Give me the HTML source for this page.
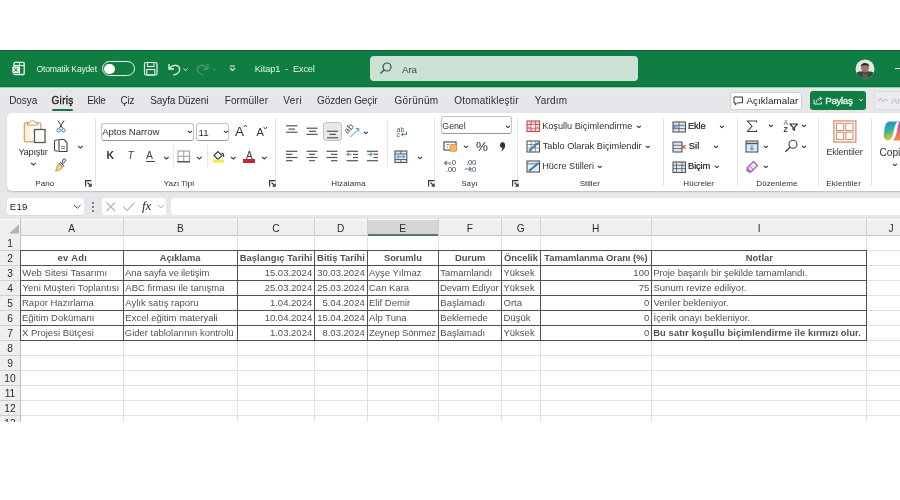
<!DOCTYPE html>
<html><head><meta charset="utf-8"><style>
html,body{margin:0;padding:0;}
body{width:900px;height:500px;overflow:hidden;position:relative;background:#fff;font-family:"Liberation Sans",sans-serif;}
#wrap{position:absolute;left:0;top:0;width:900px;height:500px;will-change:transform;}
.t{position:absolute;white-space:pre;line-height:1;}
.r{position:absolute;}
svg.r{overflow:visible;}
</style></head><body><div id="wrap">
<div class="r" style="left:0px;top:50px;width:900px;height:37px;background:#107e42;"></div>
<div class="r" style="left:0px;top:86px;width:900px;height:1px;background:#1e6540;"></div>
<div class="r" style="left:0px;top:50px;width:900px;height:1px;background:#1f6341;"></div>
<div class="r" style="left:0px;top:87px;width:900px;height:1px;background:#9fd0b4;"></div>
<div class="r" style="left:0px;top:88px;width:900px;height:1.5px;background:#d6f3e2;"></div>
<div class="r" style="left:0px;top:89.5px;width:900px;height:129px;background:#e6e6eb;"></div>
<div class="r" style="left:6.5px;top:112.5px;width:900px;height:78px;background:#fff;border-radius:5px;box-shadow:0 1px 1.5px rgba(0,0,0,0.18);"></div>
<div class="r" style="left:0px;top:219.5px;width:900px;height:15.5px;background:#efefef;"></div>
<div class="r" style="left:0px;top:234.5px;width:900px;height:1px;background:#c6c6c6;"></div>
<div class="r" style="left:367px;top:219.5px;width:71.3px;height:15.5px;background:#d4d7d4;"></div>
<div class="r" style="left:367px;top:233.5px;width:71.3px;height:2px;background:#527a62;"></div>
<div class="r" style="left:0px;top:235px;width:20px;height:187px;background:#efefef;"></div>
<div class="r" style="left:19.8px;top:218px;width:1px;height:204px;background:#c0c0c0;"></div>
<div class="r" style="left:20.5px;top:249.5px;width:880px;height:1px;background:#e0e0e0;"></div>
<div class="r" style="left:0px;top:249.5px;width:20px;height:1px;background:#d0d0d0;"></div>
<div class="r" style="left:20.5px;top:264.5px;width:880px;height:1px;background:#e0e0e0;"></div>
<div class="r" style="left:0px;top:264.5px;width:20px;height:1px;background:#d0d0d0;"></div>
<div class="r" style="left:20.5px;top:279.5px;width:880px;height:1px;background:#e0e0e0;"></div>
<div class="r" style="left:0px;top:279.5px;width:20px;height:1px;background:#d0d0d0;"></div>
<div class="r" style="left:20.5px;top:294.5px;width:880px;height:1px;background:#e0e0e0;"></div>
<div class="r" style="left:0px;top:294.5px;width:20px;height:1px;background:#d0d0d0;"></div>
<div class="r" style="left:20.5px;top:309.5px;width:880px;height:1px;background:#e0e0e0;"></div>
<div class="r" style="left:0px;top:309.5px;width:20px;height:1px;background:#d0d0d0;"></div>
<div class="r" style="left:20.5px;top:324.5px;width:880px;height:1px;background:#e0e0e0;"></div>
<div class="r" style="left:0px;top:324.5px;width:20px;height:1px;background:#d0d0d0;"></div>
<div class="r" style="left:20.5px;top:339.5px;width:880px;height:1px;background:#e0e0e0;"></div>
<div class="r" style="left:0px;top:339.5px;width:20px;height:1px;background:#d0d0d0;"></div>
<div class="r" style="left:20.5px;top:354.5px;width:880px;height:1px;background:#e0e0e0;"></div>
<div class="r" style="left:0px;top:354.5px;width:20px;height:1px;background:#d0d0d0;"></div>
<div class="r" style="left:20.5px;top:369.5px;width:880px;height:1px;background:#e0e0e0;"></div>
<div class="r" style="left:0px;top:369.5px;width:20px;height:1px;background:#d0d0d0;"></div>
<div class="r" style="left:20.5px;top:384.5px;width:880px;height:1px;background:#e0e0e0;"></div>
<div class="r" style="left:0px;top:384.5px;width:20px;height:1px;background:#d0d0d0;"></div>
<div class="r" style="left:20.5px;top:399.5px;width:880px;height:1px;background:#e0e0e0;"></div>
<div class="r" style="left:0px;top:399.5px;width:20px;height:1px;background:#d0d0d0;"></div>
<div class="r" style="left:20.5px;top:414.5px;width:880px;height:1px;background:#e0e0e0;"></div>
<div class="r" style="left:0px;top:414.5px;width:20px;height:1px;background:#d0d0d0;"></div>
<div class="r" style="left:122.8px;top:235px;width:1px;height:187px;background:#e0e0e0;"></div>
<div class="r" style="left:122.8px;top:218px;width:1px;height:17px;background:#d0d0d0;"></div>
<div class="r" style="left:237.0px;top:235px;width:1px;height:187px;background:#e0e0e0;"></div>
<div class="r" style="left:237.0px;top:218px;width:1px;height:17px;background:#d0d0d0;"></div>
<div class="r" style="left:314.0px;top:235px;width:1px;height:187px;background:#e0e0e0;"></div>
<div class="r" style="left:314.0px;top:218px;width:1px;height:17px;background:#d0d0d0;"></div>
<div class="r" style="left:366.5px;top:235px;width:1px;height:187px;background:#e0e0e0;"></div>
<div class="r" style="left:366.5px;top:218px;width:1px;height:17px;background:#d0d0d0;"></div>
<div class="r" style="left:437.8px;top:235px;width:1px;height:187px;background:#e0e0e0;"></div>
<div class="r" style="left:437.8px;top:218px;width:1px;height:17px;background:#d0d0d0;"></div>
<div class="r" style="left:501.0px;top:235px;width:1px;height:187px;background:#e0e0e0;"></div>
<div class="r" style="left:501.0px;top:218px;width:1px;height:17px;background:#d0d0d0;"></div>
<div class="r" style="left:539.5px;top:235px;width:1px;height:187px;background:#e0e0e0;"></div>
<div class="r" style="left:539.5px;top:218px;width:1px;height:17px;background:#d0d0d0;"></div>
<div class="r" style="left:651.0px;top:235px;width:1px;height:187px;background:#e0e0e0;"></div>
<div class="r" style="left:651.0px;top:218px;width:1px;height:17px;background:#d0d0d0;"></div>
<div class="r" style="left:866.2px;top:235px;width:1px;height:187px;background:#e0e0e0;"></div>
<div class="r" style="left:866.2px;top:218px;width:1px;height:17px;background:#d0d0d0;"></div>
<div class="r" style="left:20px;top:250px;width:847px;height:1px;background:#505050;"></div>
<div class="r" style="left:20px;top:265px;width:847px;height:1px;background:#505050;"></div>
<div class="r" style="left:20px;top:280px;width:847px;height:1px;background:#505050;"></div>
<div class="r" style="left:20px;top:295px;width:847px;height:1px;background:#505050;"></div>
<div class="r" style="left:20px;top:310px;width:847px;height:1px;background:#505050;"></div>
<div class="r" style="left:20px;top:325px;width:847px;height:1px;background:#505050;"></div>
<div class="r" style="left:20px;top:340px;width:847px;height:1px;background:#505050;"></div>
<div class="r" style="left:20px;top:250px;width:1px;height:91px;background:#505050;"></div>
<div class="r" style="left:123px;top:250px;width:1px;height:91px;background:#505050;"></div>
<div class="r" style="left:237px;top:250px;width:1px;height:91px;background:#505050;"></div>
<div class="r" style="left:314px;top:250px;width:1px;height:91px;background:#505050;"></div>
<div class="r" style="left:367px;top:250px;width:1px;height:91px;background:#505050;"></div>
<div class="r" style="left:438px;top:250px;width:1px;height:91px;background:#505050;"></div>
<div class="r" style="left:501px;top:250px;width:1px;height:91px;background:#505050;"></div>
<div class="r" style="left:540px;top:250px;width:1px;height:91px;background:#505050;"></div>
<div class="r" style="left:651px;top:250px;width:1px;height:91px;background:#505050;"></div>
<div class="r" style="left:866px;top:250px;width:1px;height:91px;background:#505050;"></div>
<div class="r" style="left:0px;top:422px;width:900px;height:78px;background:#fff;"></div>
<div class="t" style="left:68.25px;top:224.00px;font-size:10.2px;color:#2b2b2b;">A</div>
<div class="t" style="left:177.00px;top:224.00px;font-size:10.2px;color:#2b2b2b;">B</div>
<div class="t" style="left:272.32px;top:224.00px;font-size:10.2px;color:#2b2b2b;">C</div>
<div class="t" style="left:337.07px;top:224.00px;font-size:10.2px;color:#2b2b2b;">D</div>
<div class="t" style="left:399.25px;top:224.00px;font-size:10.2px;color:#2b2b2b;">E</div>
<div class="t" style="left:466.78px;top:224.00px;font-size:10.2px;color:#2b2b2b;">F</div>
<div class="t" style="left:516.78px;top:224.00px;font-size:10.2px;color:#2b2b2b;">G</div>
<div class="t" style="left:592.07px;top:224.00px;font-size:10.2px;color:#2b2b2b;">H</div>
<div class="t" style="left:757.68px;top:224.00px;font-size:10.2px;color:#2b2b2b;">I</div>
<div class="t" style="left:888.45px;top:224.00px;font-size:10.2px;color:#2b2b2b;">J</div>
<div class="t" style="left:7.16px;top:239.00px;font-size:10.2px;color:#2b2b2b;">1</div>
<div class="t" style="left:7.16px;top:254.00px;font-size:10.2px;color:#2b2b2b;">2</div>
<div class="t" style="left:7.16px;top:269.00px;font-size:10.2px;color:#2b2b2b;">3</div>
<div class="t" style="left:7.16px;top:284.00px;font-size:10.2px;color:#2b2b2b;">4</div>
<div class="t" style="left:7.16px;top:299.00px;font-size:10.2px;color:#2b2b2b;">5</div>
<div class="t" style="left:7.16px;top:314.00px;font-size:10.2px;color:#2b2b2b;">6</div>
<div class="t" style="left:7.16px;top:329.00px;font-size:10.2px;color:#2b2b2b;">7</div>
<div class="t" style="left:7.16px;top:344.00px;font-size:10.2px;color:#2b2b2b;">8</div>
<div class="t" style="left:7.16px;top:359.00px;font-size:10.2px;color:#2b2b2b;">9</div>
<div class="t" style="left:4.33px;top:374.00px;font-size:10.2px;color:#2b2b2b;">10</div>
<div class="t" style="left:4.71px;top:389.00px;font-size:10.2px;color:#2b2b2b;">11</div>
<div class="t" style="left:4.33px;top:404.00px;font-size:10.2px;color:#2b2b2b;">12</div>
<div class="t" style="left:4.33px;top:419.00px;font-size:10.2px;color:#2b2b2b;">13</div>
<div class="t" style="left:57.62px;top:253.00px;font-size:9.4px;color:#525252;font-weight:bold;letter-spacing:0.293px;">ev Adı</div>
<div class="t" style="left:22.35px;top:268.00px;font-size:9.5px;color:#525252;letter-spacing:0.040px;">Web Sitesi Tasarımı</div>
<div class="t" style="left:22.46px;top:283.00px;font-size:9.5px;color:#525252;letter-spacing:0.075px;">Yeni Müşteri Toplantısı</div>
<div class="t" style="left:22.00px;top:298.00px;font-size:9.5px;color:#525252;">Rapor Hazırlama</div>
<div class="t" style="left:22.00px;top:313.00px;font-size:9.5px;color:#525252;">Eğitim Dokümanı</div>
<div class="t" style="left:22.00px;top:328.00px;font-size:9.5px;color:#525252;">X Projesi Bütçesi</div>
<div class="t" style="left:159.76px;top:253.00px;font-size:9.4px;color:#525252;font-weight:bold;letter-spacing:-0.061px;">Açıklama</div>
<div class="t" style="left:125.00px;top:268.00px;font-size:9.5px;color:#525252;letter-spacing:-0.114px;">Ana sayfa ve iletişim</div>
<div class="t" style="left:125.30px;top:283.00px;font-size:9.5px;color:#525252;">ABC firması ile tanışma</div>
<div class="t" style="left:125.30px;top:298.00px;font-size:9.5px;color:#525252;">Aylık satış raporu</div>
<div class="t" style="left:125.30px;top:313.00px;font-size:9.5px;color:#525252;">Excel eğitim materyali</div>
<div class="t" style="left:124.83px;top:328.00px;font-size:9.5px;color:#525252;letter-spacing:-0.021px;">Gider tablolarının kontrolü</div>
<div class="t" style="left:239.69px;top:253.00px;font-size:9.4px;color:#525252;font-weight:bold;letter-spacing:0.067px;">Başlangıç Tarihi</div>
<div class="t" style="left:264.65px;top:268.00px;font-size:9.5px;color:#525252;">15.03.2024</div>
<div class="t" style="left:264.65px;top:283.00px;font-size:9.5px;color:#525252;">25.03.2024</div>
<div class="t" style="left:269.94px;top:298.00px;font-size:9.5px;color:#525252;">1.04.2024</div>
<div class="t" style="left:264.65px;top:313.00px;font-size:9.5px;color:#525252;">10.04.2024</div>
<div class="t" style="left:269.94px;top:328.00px;font-size:9.5px;color:#525252;">1.03.2024</div>
<div class="t" style="left:317.11px;top:253.00px;font-size:9.4px;color:#525252;font-weight:bold;">Bitiş Tarihi</div>
<div class="t" style="left:317.15px;top:268.00px;font-size:9.5px;color:#525252;">30.03.2024</div>
<div class="t" style="left:317.15px;top:283.00px;font-size:9.5px;color:#525252;">25.03.2024</div>
<div class="t" style="left:322.44px;top:298.00px;font-size:9.5px;color:#525252;">5.04.2024</div>
<div class="t" style="left:317.15px;top:313.00px;font-size:9.5px;color:#525252;">15.04.2024</div>
<div class="t" style="left:322.44px;top:328.00px;font-size:9.5px;color:#525252;">8.03.2024</div>
<div class="t" style="left:383.89px;top:253.00px;font-size:9.4px;color:#525252;font-weight:bold;">Sorumlu</div>
<div class="t" style="left:369.00px;top:268.00px;font-size:9.5px;color:#525252;">Ayşe Yılmaz</div>
<div class="t" style="left:369.00px;top:283.00px;font-size:9.5px;color:#525252;">Can Kara</div>
<div class="t" style="left:369.00px;top:298.00px;font-size:9.5px;color:#525252;">Elif Demir</div>
<div class="t" style="left:369.00px;top:313.00px;font-size:9.5px;color:#525252;">Alp Tuna</div>
<div class="t" style="left:369.01px;top:328.00px;font-size:9.5px;color:#525252;letter-spacing:-0.175px;">Zeynep Sönmez</div>
<div class="t" style="left:455.06px;top:253.00px;font-size:9.4px;color:#525252;font-weight:bold;">Durum</div>
<div class="t" style="left:440.30px;top:268.00px;font-size:9.5px;color:#525252;">Tamamlandı</div>
<div class="t" style="left:439.94px;top:283.00px;font-size:9.5px;color:#525252;letter-spacing:-0.092px;">Devam Ediyor</div>
<div class="t" style="left:440.30px;top:298.00px;font-size:9.5px;color:#525252;">Başlamadı</div>
<div class="t" style="left:440.30px;top:313.00px;font-size:9.5px;color:#525252;">Beklemede</div>
<div class="t" style="left:440.30px;top:328.00px;font-size:9.5px;color:#525252;">Başlamadı</div>
<div class="t" style="left:504.07px;top:253.00px;font-size:9.4px;color:#525252;font-weight:bold;">Öncelik</div>
<div class="t" style="left:503.50px;top:268.00px;font-size:9.5px;color:#525252;">Yüksek</div>
<div class="t" style="left:503.50px;top:283.00px;font-size:9.5px;color:#525252;">Yüksek</div>
<div class="t" style="left:503.50px;top:298.00px;font-size:9.5px;color:#525252;">Orta</div>
<div class="t" style="left:503.50px;top:313.00px;font-size:9.5px;color:#525252;">Düşük</div>
<div class="t" style="left:503.50px;top:328.00px;font-size:9.5px;color:#525252;">Yüksek</div>
<div class="t" style="left:544.16px;top:253.00px;font-size:9.4px;color:#525252;font-weight:bold;">Tamamlanma Oranı (%)</div>
<div class="t" style="left:633.35px;top:268.00px;font-size:9.5px;color:#525252;">100</div>
<div class="t" style="left:638.63px;top:283.00px;font-size:9.5px;color:#525252;">75</div>
<div class="t" style="left:643.92px;top:298.00px;font-size:9.5px;color:#525252;">0</div>
<div class="t" style="left:643.92px;top:313.00px;font-size:9.5px;color:#525252;">0</div>
<div class="t" style="left:643.92px;top:328.00px;font-size:9.5px;color:#525252;">0</div>
<div class="t" style="left:745.82px;top:253.00px;font-size:9.4px;color:#525252;font-weight:bold;">Notlar</div>
<div class="t" style="left:653.14px;top:268.00px;font-size:9.5px;color:#525252;letter-spacing:-0.050px;">Proje başarılı bir şekilde tamamlandı.</div>
<div class="t" style="left:653.50px;top:283.00px;font-size:9.5px;color:#525252;">Sunum revize ediliyor.</div>
<div class="t" style="left:653.50px;top:298.00px;font-size:9.5px;color:#525252;">Veriler bekleniyor.</div>
<div class="t" style="left:653.50px;top:313.00px;font-size:9.5px;color:#525252;">İçerik onayı bekleniyor.</div>
<div class="t" style="left:653.29px;top:328.00px;font-size:9.4px;color:#525252;font-weight:bold;letter-spacing:0.072px;">Bu satır koşullu biçimlendirme ile kırmızı olur.</div>
<svg class="r" style="left:11px;top:61px;" width="16" height="16" viewBox="0 0 16 16"><rect x="3" y="1.3" width="10.2" height="12.2" rx="1" fill="none" stroke="#e8f5ec" stroke-width="1.3"/>
<line x1="3" y1="4.5" x2="13" y2="4.5" stroke="#e8f5ec" stroke-width="1.1"/>
<line x1="8.5" y1="1.5" x2="8.5" y2="13.5" stroke="#e8f5ec" stroke-width="1.1"/>
<rect x="1.3" y="5.4" width="7" height="6.7" rx="1" fill="#e8f5ec"/>
<path d="M3.3 7 L6.3 10.6 M6.3 7 L3.3 10.6" stroke="#1b7a43" stroke-width="1"/></svg>
<div class="t" style="left:36.61px;top:65.00px;font-size:8.6px;color:#e2f6ea;letter-spacing:-0.223px;">Otomatik Kaydet</div>
<div class="r" style="left:102px;top:61px;width:33px;height:15px;border:1.2px solid #f0f0f0;border-radius:8px;box-sizing:border-box;"></div>
<div class="r" style="left:104px;top:63.5px;width:10.5px;height:10.5px;background:#fff;border-radius:50%;"></div>
<svg class="r" style="left:143px;top:61px;" width="16" height="15" viewBox="0 0 16 15"><rect x="1.5" y="1.5" width="12.5" height="12.5" rx="1.5" fill="none" stroke="#e8f5ec" stroke-width="1.2"/>
<rect x="4.5" y="1.5" width="6.5" height="4" fill="none" stroke="#e8f5ec" stroke-width="1.1"/>
<rect x="3.8" y="8.5" width="8" height="5.5" fill="none" stroke="#e8f5ec" stroke-width="1.1"/></svg>
<svg class="r" style="left:166px;top:60px;" width="24" height="17" viewBox="0 0 24 17"><path d="M3 4 V9 H8" fill="none" stroke="#e8f5ec" stroke-width="1.3"/>
<path d="M3.5 8.5 C6 4.5 12.5 4 13.5 8.5 C14.3 12 11 14.5 7.5 15" fill="none" stroke="#e8f5ec" stroke-width="1.3"/>
<path d="M17.5 8.5 L19.5 10.5 L21.5 8.5" fill="none" stroke="#e8f5ec" stroke-width="1"/></svg>
<svg class="r" style="left:195px;top:60px;" width="24" height="17" viewBox="0 0 24 17"><path d="M13 4 V9 H8" fill="none" stroke="#4f9a6c" stroke-width="1.3"/>
<path d="M12.5 8.5 C10 4.5 3.5 4 2.5 8.5 C1.7 12 5 14.5 8.5 15" fill="none" stroke="#4f9a6c" stroke-width="1.3"/>
<path d="M17.5 8.5 L19.5 10.5 L21.5 8.5" fill="none" stroke="#4f9a6c" stroke-width="1"/></svg>
<svg class="r" style="left:228.5px;top:65px;" width="7" height="7" viewBox="0 0 7 7"><path d="M1 1 H6" stroke="#e8f5ec" stroke-width="1"/><path d="M1 3 L3.5 5.5 L6 3" fill="none" stroke="#e8f5ec" stroke-width="1.1"/></svg>
<div class="t" style="left:254.86px;top:65.00px;font-size:9.2px;color:#e2f6ea;letter-spacing:-0.116px;">Kitap1  -  Excel</div>
<div class="r" style="left:369.5px;top:56px;width:268px;height:24.5px;background:#cde2d5;border-radius:4px;"></div>
<svg class="r" style="left:378px;top:61px;" width="16" height="15" viewBox="0 0 16 15"><circle cx="9" cy="6" r="4" fill="none" stroke="#2d5a3f" stroke-width="1.2"/><path d="M6.2 8.8 L2.5 12.5" stroke="#2d5a3f" stroke-width="1.3"/></svg>
<div class="t" style="left:402.00px;top:65.00px;font-size:9.8px;color:#2c4b37;letter-spacing:-0.120px;">Ara</div>
<svg class="r" style="left:854.5px;top:59px;" width="20" height="20" viewBox="0 0 20 20"><defs><clipPath id="av"><circle cx="10" cy="10" r="9.5"/></clipPath></defs>
<g clip-path="url(#av)"><rect width="20" height="20" fill="#e4e8e5"/>
<path d="M0 20 V15 C2 12.5 6 12 10 12.5 C14 12 18 12.5 20 15 V20Z" fill="#3b463b"/>
<ellipse cx="10" cy="8.6" rx="4" ry="4.9" fill="#9c7868"/>
<path d="M5.6 7.5 C5.5 3 14.5 3 14.4 7.5 C13.5 5.8 6.5 5.8 5.6 7.5Z" fill="#231e1b"/>
<path d="M7.5 13.5 L10 15.5 L12.5 13.5 L12.8 20 H7.2Z" fill="#5d6455"/></g></svg>
<div class="r" style="left:895px;top:67.8px;width:5px;height:1.3px;background:#e8f5ec;"></div>
<div class="t" style="left:9.20px;top:96.00px;font-size:10px;color:#2e2e2e;letter-spacing:-0.063px;">Dosya</div>
<div class="t" style="left:51.50px;top:96.00px;font-size:10px;color:#222;letter-spacing:0.325px;-webkit-text-stroke:0.35px #222;">Giriş</div>
<div class="t" style="left:87.20px;top:96.00px;font-size:10px;color:#2e2e2e;letter-spacing:-0.250px;">Ekle</div>
<div class="t" style="left:120.50px;top:96.00px;font-size:10px;color:#2e2e2e;letter-spacing:-0.225px;">Çiz</div>
<div class="t" style="left:150.25px;top:96.00px;font-size:10px;color:#2e2e2e;letter-spacing:-0.114px;">Sayfa Düzeni</div>
<div class="t" style="left:224.70px;top:96.00px;font-size:10px;color:#2e2e2e;letter-spacing:0.131px;">Formüller</div>
<div class="t" style="left:283.25px;top:96.00px;font-size:10px;color:#2e2e2e;letter-spacing:0.400px;">Veri</div>
<div class="t" style="left:317.00px;top:96.00px;font-size:10px;color:#2e2e2e;letter-spacing:-0.091px;">Gözden Geçir</div>
<div class="t" style="left:394.50px;top:96.00px;font-size:10px;color:#2e2e2e;letter-spacing:0.325px;">Görünüm</div>
<div class="t" style="left:454.15px;top:96.00px;font-size:10px;color:#2e2e2e;letter-spacing:0.262px;">Otomatikleştir</div>
<div class="t" style="left:534.75px;top:96.00px;font-size:10px;color:#2e2e2e;letter-spacing:0.180px;">Yardım</div>
<div class="r" style="left:52px;top:109px;width:21px;height:2.2px;background:#1f6e47;border-radius:1px;"></div>
<div class="r" style="left:730px;top:92px;width:72px;height:17.5px;background:#fff;border:1px solid #cfcfcf;border-radius:3px;box-sizing:border-box;"></div>
<svg class="r" style="left:732.5px;top:95.5px;" width="11" height="10" viewBox="0 0 11 10"><path d="M1 1 H9.5 V6.8 H4.5 L2.3 9 V6.8 H1 Z" fill="none" stroke="#333" stroke-width="1" stroke-linejoin="round"/></svg>
<div class="t" style="left:746.50px;top:96.00px;font-size:9.8px;color:#1c1c1c;letter-spacing:0.049px;">Açıklamalar</div>
<div class="r" style="left:809.5px;top:91px;width:56.5px;height:18.5px;background:#107e42;border-radius:3px;"></div>
<svg class="r" style="left:812.5px;top:95px;" width="10" height="10" viewBox="0 0 10 10"><path d="M1 4.5 V9 H8.5 V7" fill="none" stroke="#e8f5ec" stroke-width="1"/><path d="M3 7.5 C3.3 4.5 5.5 3.5 8.5 3.5 M6.8 1.5 L8.8 3.5 L6.8 5.5" fill="none" stroke="#e8f5ec" stroke-width="1"/></svg>
<div class="t" style="left:825.22px;top:96.00px;font-size:9.8px;color:#f4faf6;letter-spacing:-0.355px;-webkit-text-stroke:0.3px #f4faf6;">Paylaş</div>
<svg class="r" style="left:857.5px;top:98px;" width="6" height="5" viewBox="0 0 6 5"><path d="M1 1 L3 3 L5 1" fill="none" stroke="#e8f5ec" stroke-width="1"/></svg>
<div class="r" style="left:874px;top:91px;width:40px;height:18.5px;background:#ececf0;border:1px solid #dcdce0;border-radius:3px;box-sizing:border-box;"></div>
<svg class="r" style="left:877px;top:96px;" width="12" height="8" viewBox="0 0 12 8"><path d="M1 5 L3.5 2 L6 6 L8.5 3 L11 5" fill="none" stroke="#b5b5b5" stroke-width="1"/></svg>
<div class="t" style="left:891.00px;top:96.00px;font-size:9.8px;color:#b8b8b8;">Ara</div>
<div class="r" style="left:94.5px;top:118px;width:1px;height:68px;background:#e3e3e3;"></div>
<div class="r" style="left:275px;top:118px;width:1px;height:68px;background:#e3e3e3;"></div>
<div class="r" style="left:434px;top:118px;width:1px;height:68px;background:#e3e3e3;"></div>
<div class="r" style="left:517px;top:118px;width:1px;height:68px;background:#e3e3e3;"></div>
<div class="r" style="left:663px;top:118px;width:1px;height:68px;background:#e3e3e3;"></div>
<div class="r" style="left:737px;top:118px;width:1px;height:68px;background:#e3e3e3;"></div>
<div class="r" style="left:818px;top:118px;width:1px;height:68px;background:#e3e3e3;"></div>
<div class="r" style="left:870.5px;top:118px;width:1px;height:68px;background:#e3e3e3;"></div>
<div class="t" style="left:35.36px;top:180.00px;font-size:8px;color:#2e2e2e;letter-spacing:0.027px;">Pano</div>
<div class="t" style="left:163.80px;top:180.00px;font-size:8px;color:#2e2e2e;letter-spacing:0.005px;">Yazı Tipi</div>
<div class="t" style="left:331.36px;top:180.00px;font-size:8px;color:#2e2e2e;letter-spacing:0.103px;">Hizalama</div>
<div class="t" style="left:461.14px;top:180.00px;font-size:8px;color:#2e2e2e;letter-spacing:0.127px;">Sayı</div>
<div class="t" style="left:579.64px;top:180.00px;font-size:8px;color:#2e2e2e;letter-spacing:0.030px;">Stiller</div>
<div class="t" style="left:683.36px;top:180.00px;font-size:8px;color:#2e2e2e;letter-spacing:0.037px;">Hücreler</div>
<div class="t" style="left:756.36px;top:180.00px;font-size:8px;color:#2e2e2e;letter-spacing:0.065px;">Düzenleme</div>
<div class="t" style="left:826.36px;top:180.00px;font-size:8px;color:#2e2e2e;letter-spacing:0.176px;">Eklentiler</div>
<svg class="r" style="left:84.5px;top:180px;" width="7" height="7" viewBox="0 0 7 7"><path d="M0.6 6.4 V0.6 H6.4" fill="none" stroke="#333" stroke-width="1.1"/><path d="M2.5 2.5 L6 6 M6.2 3.5 V6.2 H3.5" fill="none" stroke="#333" stroke-width="1.1"/></svg>
<svg class="r" style="left:268.5px;top:180px;" width="7" height="7" viewBox="0 0 7 7"><path d="M0.6 6.4 V0.6 H6.4" fill="none" stroke="#333" stroke-width="1.1"/><path d="M2.5 2.5 L6 6 M6.2 3.5 V6.2 H3.5" fill="none" stroke="#333" stroke-width="1.1"/></svg>
<svg class="r" style="left:427.5px;top:180px;" width="7" height="7" viewBox="0 0 7 7"><path d="M0.6 6.4 V0.6 H6.4" fill="none" stroke="#333" stroke-width="1.1"/><path d="M2.5 2.5 L6 6 M6.2 3.5 V6.2 H3.5" fill="none" stroke="#333" stroke-width="1.1"/></svg>
<svg class="r" style="left:511.5px;top:180px;" width="7" height="7" viewBox="0 0 7 7"><path d="M0.6 6.4 V0.6 H6.4" fill="none" stroke="#333" stroke-width="1.1"/><path d="M2.5 2.5 L6 6 M6.2 3.5 V6.2 H3.5" fill="none" stroke="#333" stroke-width="1.1"/></svg>
<svg class="r" style="left:23px;top:119px;" width="24" height="25" viewBox="0 0 24 25"><defs><linearGradient id="cb" x1="0" y1="0" x2="1" y2="0"><stop offset="0" stop-color="#fbe8c6"/><stop offset="0.6" stop-color="#fffdf8"/><stop offset="1" stop-color="#ffffff"/></linearGradient></defs>
<rect x="1.3" y="3.8" width="16.5" height="19" rx="1.2" fill="url(#cb)" stroke="#c8a46b" stroke-width="1.2"/>
<path d="M4.5 6 V3.5 H7 C7 1 12 1 12 3.5 H14.5 V6 Z" fill="#fff" stroke="#b89a6a" stroke-width="1"/>
<rect x="11.5" y="10.5" width="10.5" height="13" fill="#fff" stroke="#555" stroke-width="1.3"/></svg>
<div class="t" style="left:18.37px;top:147.00px;font-size:9.4px;color:#333;letter-spacing:-0.300px;">Yapıştır</div>
<svg class="r" style="left:29.9px;top:162.0px;" width="6.675" height="5" viewBox="0 0 6.675 5"><path d="M1 1 L3.3375 2.986875 L5.675 1" fill="none" stroke="#444" stroke-width="1.05"/></svg>
<svg class="r" style="left:55.5px;top:120px;" width="10" height="13" viewBox="0 0 10 13"><path d="M2 0.5 L6.6 8.3 M8 0.5 L3.4 8.3" stroke="#333" stroke-width="0.9"/>
<circle cx="2.6" cy="10.3" r="1.7" fill="none" stroke="#3b7fc0" stroke-width="1"/><circle cx="7.4" cy="10.3" r="1.7" fill="none" stroke="#3b7fc0" stroke-width="1"/></svg>
<svg class="r" style="left:53px;top:138px;" width="15" height="15" viewBox="0 0 15 15"><path d="M5 2 H3 C2 2 1.5 2.5 1.5 3.5 V11.5 C1.5 12.5 2 13 3 13 H5" fill="none" stroke="#444" stroke-width="1.1"/>
<path d="M6 1.5 H11 L14 4.5 V13.5 H6 Z" fill="#fff" stroke="#444" stroke-width="1.1"/>
<path d="M8 8.5 H12 M8 10.5 H12" stroke="#777" stroke-width="0.9"/></svg>
<svg class="r" style="left:76.9px;top:144.5px;" width="6.675" height="5" viewBox="0 0 6.675 5"><path d="M1 1 L3.3375 2.986875 L5.675 1" fill="none" stroke="#444" stroke-width="1.05"/></svg>
<svg class="r" style="left:54px;top:158px;" width="14" height="14" viewBox="0 0 14 14"><path d="M9.5 1 C10.5 0.3 12.2 1.5 11.6 2.6 L9.3 5.6 L8 4.4 Z" fill="#fff" stroke="#444" stroke-width="1"/>
<path d="M6.2 4.5 L9.8 7.6 L8.6 8.8 L5 5.7 Z" fill="#fff" stroke="#444" stroke-width="1"/>
<path d="M5 5.8 L8.6 8.9 C7.5 11 5 12.8 1.5 13 C2.5 11.5 2.8 9.8 2.8 8.5 C3.2 7.2 4 6.4 5 5.8Z" fill="#f3d294" stroke="#c09050" stroke-width="0.9"/></svg>
<div class="r" style="left:100.5px;top:122.5px;width:93px;height:18.5px;background:#fff;border:1px solid #c4c4c4;border-bottom-color:#9a9a9a;border-radius:3px;box-sizing:border-box;"></div>
<div class="t" style="left:102.20px;top:127.00px;font-size:9.6px;color:#333;letter-spacing:-0.089px;">Aptos Narrow</div>
<svg class="r" style="left:187.4px;top:130.0px;" width="5.824999999999999" height="5" viewBox="0 0 5.824999999999999 5"><path d="M1 1 L2.9124999999999996 2.625625 L4.824999999999999 1" fill="none" stroke="#333" stroke-width="1.05"/></svg>
<div class="r" style="left:196px;top:122.5px;width:33.4px;height:18.5px;background:#fff;border:1px solid #c4c4c4;border-bottom-color:#9a9a9a;border-radius:3px;box-sizing:border-box;"></div>
<div class="t" style="left:198.50px;top:128.00px;font-size:9.8px;color:#333;">11</div>
<svg class="r" style="left:222.9px;top:130.0px;" width="5.824999999999999" height="5" viewBox="0 0 5.824999999999999 5"><path d="M1 1 L2.9124999999999996 2.625625 L4.824999999999999 1" fill="none" stroke="#333" stroke-width="1.05"/></svg>
<div class="t" style="left:235.00px;top:125.00px;font-size:13.5px;color:#333;">A</div>
<svg class="r" style="left:243px;top:124px;" width="5" height="4" viewBox="0 0 5 4"><path d="M0.7 3 L2.3 1 L3.9 3" fill="none" stroke="#333" stroke-width="0.9"/></svg>
<div class="t" style="left:256.50px;top:127.00px;font-size:11px;color:#333;">A</div>
<svg class="r" style="left:263px;top:126px;" width="5" height="4" viewBox="0 0 5 4"><path d="M0.7 1 L2.3 3 L3.9 1" fill="none" stroke="#333" stroke-width="0.9"/></svg>
<div class="t" style="left:106.50px;top:151.00px;font-size:10.4px;color:#333;font-weight:bold;">K</div>
<div class="t" style="left:127.50px;top:151.00px;font-size:10.4px;color:#444;font-style:italic;">T</div>
<div class="t" style="left:146.00px;top:151.00px;font-size:10.4px;color:#444;">A</div>
<div class="r" style="left:145.5px;top:161px;width:9.5px;height:1.1px;background:#444;"></div>
<svg class="r" style="left:162.9px;top:155.5px;" width="6.675" height="5" viewBox="0 0 6.675 5"><path d="M1 1 L3.3375 2.986875 L5.675 1" fill="none" stroke="#444" stroke-width="1.05"/></svg>
<div class="r" style="left:172.5px;top:145px;width:1px;height:22px;background:#e6e6e6;"></div>
<svg class="r" style="left:177px;top:150px;" width="14" height="13" viewBox="0 0 14 13"><rect x="1" y="1" width="11.5" height="10.5" fill="none" stroke="#9a9a9a" stroke-width="1"/>
<path d="M6.75 1 V11.5 M1 6.25 H12.5" stroke="#9a9a9a" stroke-width="1"/><path d="M0.5 11.8 H13" stroke="#444" stroke-width="1.3"/></svg>
<svg class="r" style="left:196.4px;top:155.5px;" width="6.675" height="5" viewBox="0 0 6.675 5"><path d="M1 1 L3.3375 2.986875 L5.675 1" fill="none" stroke="#444" stroke-width="1.05"/></svg>
<div class="r" style="left:206.5px;top:145px;width:1px;height:22px;background:#e6e6e6;"></div>
<svg class="r" style="left:212px;top:149px;" width="13" height="14" viewBox="0 0 13 14"><path d="M2 6.5 L6 2.5 L10 6.5 L6 10.5 Z" fill="#fff" stroke="#333" stroke-width="1.1"/>
<path d="M9.5 4 C11.5 4.5 12 6 11.5 8" fill="none" stroke="#333" stroke-width="1.1"/>
<rect x="0.8" y="10.5" width="11.2" height="3.2" fill="#f2ee3a"/></svg>
<svg class="r" style="left:229.9px;top:155.5px;" width="6.675" height="5" viewBox="0 0 6.675 5"><path d="M1 1 L3.3375 2.986875 L5.675 1" fill="none" stroke="#444" stroke-width="1.05"/></svg>
<div class="t" style="left:246.00px;top:151.00px;font-size:10px;color:#333;">A</div>
<div class="r" style="left:242.8px;top:159.4px;width:12.7px;height:3.2px;background:#c2262e;"></div>
<svg class="r" style="left:261.4px;top:155.5px;" width="6.675" height="5" viewBox="0 0 6.675 5"><path d="M1 1 L3.3375 2.986875 L5.675 1" fill="none" stroke="#444" stroke-width="1.05"/></svg>
<svg class="r" style="left:0px;top:0px;" width="1" height="1" viewBox="0 0 1 1"><path d="M286 125.8 H297.4" stroke="#555" stroke-width="1.2"/><path d="M288.5 129.1 H295" stroke="#555" stroke-width="1.2"/><path d="M286 132.2 H297.4" stroke="#555" stroke-width="1.2"/></svg>
<svg class="r" style="left:0px;top:0px;" width="1" height="1" viewBox="0 0 1 1"><path d="M306.5 128.2 H317.5" stroke="#555" stroke-width="1.2"/><path d="M309 131.3 H316" stroke="#555" stroke-width="1.2"/><path d="M306.5 134.4 H317.5" stroke="#555" stroke-width="1.2"/></svg>
<div class="r" style="left:323.3px;top:122.4px;width:18.4px;height:18.9px;background:#e8e8e8;border:1px solid #c3c3c3;border-radius:3px;box-sizing:border-box;"></div>
<svg class="r" style="left:0px;top:0px;" width="1" height="1" viewBox="0 0 1 1"><path d="M327 131.3 H338" stroke="#555" stroke-width="1.2"/><path d="M329.5 134.4 H336" stroke="#555" stroke-width="1.2"/><path d="M327 137.8 H338" stroke="#555" stroke-width="1.2"/></svg>
<svg class="r" style="left:345px;top:123px;" width="16" height="16" viewBox="0 0 16 16"><text x="0" y="0" transform="translate(2.6 11.3) rotate(-48)" font-family="Liberation Sans" font-size="9" fill="#444">ab</text>
<path d="M5.5 14 L13.5 6" stroke="#4a90c9" stroke-width="1"/><path d="M10.8 5.6 H13.8 V8.6" fill="none" stroke="#4a90c9" stroke-width="1"/></svg>
<svg class="r" style="left:362.9px;top:130.5px;" width="5.824999999999999" height="5" viewBox="0 0 5.824999999999999 5"><path d="M1 1 L2.9124999999999996 2.625625 L4.824999999999999 1" fill="none" stroke="#333" stroke-width="1.05"/></svg>
<svg class="r" style="left:0px;top:0px;" width="1" height="1" viewBox="0 0 1 1"><path d="M286 151.3 H297.4" stroke="#555" stroke-width="1.2"/><path d="M286 154.3 H292.5" stroke="#555" stroke-width="1.2"/><path d="M286 157.5 H297.4" stroke="#555" stroke-width="1.2"/><path d="M286 160.7 H292.5" stroke="#555" stroke-width="1.2"/></svg>
<svg class="r" style="left:0px;top:0px;" width="1" height="1" viewBox="0 0 1 1"><path d="M306.5 151.3 H317.5" stroke="#555" stroke-width="1.2"/><path d="M309 154.3 H315" stroke="#555" stroke-width="1.2"/><path d="M306.5 157.5 H317.5" stroke="#555" stroke-width="1.2"/><path d="M309 160.7 H315" stroke="#555" stroke-width="1.2"/></svg>
<svg class="r" style="left:0px;top:0px;" width="1" height="1" viewBox="0 0 1 1"><path d="M326.5 151.3 H337.5" stroke="#555" stroke-width="1.2"/><path d="M331 154.3 H337.5" stroke="#555" stroke-width="1.2"/><path d="M326.5 157.5 H337.5" stroke="#555" stroke-width="1.2"/><path d="M331 160.7 H337.5" stroke="#555" stroke-width="1.2"/></svg>
<svg class="r" style="left:0px;top:0px;" width="1" height="1" viewBox="0 0 1 1"><path d="M346.5 151.3 H358" stroke="#555" stroke-width="1.2"/><path d="M353 154.3 H358" stroke="#555" stroke-width="1.2"/><path d="M353 157.5 H358" stroke="#555" stroke-width="1.2"/><path d="M346.5 160.7 H358" stroke="#555" stroke-width="1.2"/></svg>
<svg class="r" style="left:346px;top:152px;" width="6" height="5" viewBox="0 0 6 5"><path d="M0.8 2.3 H5.5 M2.8 0.5 L0.8 2.3 L2.8 4.1" fill="none" stroke="#3b83c4" stroke-width="1"/></svg>
<svg class="r" style="left:0px;top:0px;" width="1" height="1" viewBox="0 0 1 1"><path d="M367 151.3 H378" stroke="#555" stroke-width="1.2"/><path d="M373.5 154.3 H378" stroke="#555" stroke-width="1.2"/><path d="M373.5 157.5 H378" stroke="#555" stroke-width="1.2"/><path d="M367 160.7 H378" stroke="#555" stroke-width="1.2"/></svg>
<svg class="r" style="left:366.5px;top:152px;" width="6" height="5" viewBox="0 0 6 5"><path d="M0.5 2.3 H5.2 M3.2 0.5 L5.2 2.3 L3.2 4.1" fill="none" stroke="#3b83c4" stroke-width="1"/></svg>
<div class="r" style="left:386.5px;top:120px;width:1px;height:47px;background:#e6e6e6;"></div>
<div class="t" style="left:396.50px;top:126.00px;font-size:7px;color:#555;">ab</div>
<div class="t" style="left:396.50px;top:131.00px;font-size:7px;color:#555;">c</div>
<svg class="r" style="left:400px;top:131px;" width="8" height="7" viewBox="0 0 8 7"><path d="M6.5 0.5 V3.5 H1.5 M3.3 1.7 L1.3 3.5 L3.3 5.3" fill="none" stroke="#3b83c4" stroke-width="1"/></svg>
<svg class="r" style="left:394px;top:149.5px;" width="14" height="13" viewBox="0 0 14 13"><rect x="1" y="1" width="11.8" height="11.5" fill="#d5ebf8" stroke="#555" stroke-width="1.1"/>
<path d="M1 4 H12.8 M1 9.5 H12.8 M6.9 1 V4 M6.9 9.5 V12.5" stroke="#555" stroke-width="0.9"/>
<path d="M3 6.75 H10.8 M4.6 5.4 L3 6.75 L4.6 8.1 M9.2 5.4 L10.8 6.75 L9.2 8.1" fill="none" stroke="#3b83c4" stroke-width="0.9"/></svg>
<svg class="r" style="left:416.9px;top:156.0px;" width="5.824999999999999" height="5" viewBox="0 0 5.824999999999999 5"><path d="M1 1 L2.9124999999999996 2.625625 L4.824999999999999 1" fill="none" stroke="#333" stroke-width="1.05"/></svg>
<div class="r" style="left:441.4px;top:116.4px;width:70.2px;height:17.6px;background:#fff;border:1px solid #c4c4c4;border-bottom-color:#9a9a9a;border-radius:3px;box-sizing:border-box;"></div>
<div class="t" style="left:442.36px;top:122.00px;font-size:8.8px;color:#333;letter-spacing:-0.060px;">Genel</div>
<svg class="r" style="left:504.9px;top:125.0px;" width="5.824999999999999" height="5" viewBox="0 0 5.824999999999999 5"><path d="M1 1 L2.9124999999999996 2.625625 L4.824999999999999 1" fill="none" stroke="#333" stroke-width="1.05"/></svg>
<svg class="r" style="left:443px;top:141px;" width="16" height="11" viewBox="0 0 16 11"><rect x="1" y="1" width="12" height="8" fill="#fff" stroke="#444" stroke-width="1.1"/>
<path d="M3.5 3.5 H6 M3.5 6 H5" stroke="#666" stroke-width="0.8"/>
<rect x="7" y="3.5" width="6.5" height="6.8" rx="1" fill="#f4b46b" stroke="#d48a3a" stroke-width="0.8"/></svg>
<svg class="r" style="left:463.2px;top:144.5px;" width="5.824999999999999" height="5" viewBox="0 0 5.824999999999999 5"><path d="M1 1 L2.9124999999999996 2.625625 L4.824999999999999 1" fill="none" stroke="#333" stroke-width="1.05"/></svg>
<div class="t" style="left:476.00px;top:140.00px;font-size:13.5px;color:#333;">%</div>
<svg class="r" style="left:498px;top:140px;" width="9" height="12" viewBox="0 0 9 12"><path d="M3.5 2.5 C6.5 1.5 8 4.5 6.8 7.5 C6 9.5 4.5 10.8 2.5 11.5 C4 10 4.5 9 4.2 7.8 C2.5 7.5 2 6.5 2 5.2 C2 3.8 2.6 2.9 3.5 2.5Z" fill="#333"/></svg>
<svg class="r" style="left:443px;top:159px;" width="15" height="14" viewBox="0 0 15 14"><path d="M1.5 4 H8 M3.8 1.8 L1.5 4 L3.8 6.2" fill="none" stroke="#4a7fa8" stroke-width="1.1"/></svg>
<div class="t" style="left:448.80px;top:159.00px;font-size:7.8px;color:#444;letter-spacing:0.762px;">.0</div>
<div class="t" style="left:446.00px;top:166.00px;font-size:7.8px;color:#444;letter-spacing:-0.383px;">.00</div>
<div class="t" style="left:466.30px;top:159.00px;font-size:7.8px;color:#444;letter-spacing:-0.433px;">.00</div>
<svg class="r" style="left:463.5px;top:166px;" width="15" height="7" viewBox="0 0 15 7"><path d="M0.7 3 H7.3 M5 0.8 L7.3 3 L5 5.2" fill="none" stroke="#4a7fa8" stroke-width="1.1"/></svg>
<div class="t" style="left:470.30px;top:166.00px;font-size:7.8px;color:#444;letter-spacing:-0.538px;">.0</div>
<svg class="r" style="left:526px;top:119.5px;" width="15" height="12" viewBox="0 0 15 12"><rect x="1" y="1" width="12.5" height="10.5" fill="#f5d6d6" stroke="#c0504d" stroke-width="1.1"/>
<path d="M1 4.5 H13.5 M1 8 H13.5 M5.2 1 V11.5 M9.3 1 V11.5" stroke="#c0504d" stroke-width="0.9"/>
<rect x="5.5" y="4.8" width="3.6" height="3" fill="#fff"/></svg>
<div class="t" style="left:542.16px;top:122.00px;font-size:9.2px;color:#333;letter-spacing:-0.014px;">Koşullu Biçimlendirme</div>
<svg class="r" style="left:635.9px;top:125.0px;" width="5.824999999999999" height="5" viewBox="0 0 5.824999999999999 5"><path d="M1 1 L2.9124999999999996 2.625625 L4.824999999999999 1" fill="none" stroke="#333" stroke-width="1.05"/></svg>
<svg class="r" style="left:526px;top:139.5px;" width="15" height="13" viewBox="0 0 15 13"><rect x="1" y="1" width="12.5" height="11" fill="#fff" stroke="#555" stroke-width="1.1"/>
<path d="M1 4.5 H13.5 M1 8 H13.5 M5.2 1 V12 M9.3 1 V12" stroke="#777" stroke-width="0.8"/>
<path d="M3 11 L12.5 2.5" stroke="#3b83c4" stroke-width="2"/></svg>
<div class="t" style="left:542.72px;top:142.00px;font-size:9.2px;color:#333;letter-spacing:-0.007px;">Tablo Olarak Biçimlendir</div>
<svg class="r" style="left:644.9px;top:145.0px;" width="5.824999999999999" height="5" viewBox="0 0 5.824999999999999 5"><path d="M1 1 L2.9124999999999996 2.625625 L4.824999999999999 1" fill="none" stroke="#333" stroke-width="1.05"/></svg>
<svg class="r" style="left:526px;top:160px;" width="15" height="13" viewBox="0 0 15 13"><rect x="1" y="1" width="12.5" height="11" fill="#e3f0fa" stroke="#555" stroke-width="1.1"/>
<path d="M1 3.8 H13.5" stroke="#555" stroke-width="0.8"/>
<path d="M3 11 L12.5 3" stroke="#3b83c4" stroke-width="2"/><path d="M3 11 L12.5 3" stroke="#555" stroke-width="0.6"/></svg>
<div class="t" style="left:542.16px;top:162.00px;font-size:9.2px;color:#333;letter-spacing:-0.022px;">Hücre Stilleri</div>
<svg class="r" style="left:596.9px;top:165.0px;" width="5.824999999999999" height="5" viewBox="0 0 5.824999999999999 5"><path d="M1 1 L2.9124999999999996 2.625625 L4.824999999999999 1" fill="none" stroke="#333" stroke-width="1.05"/></svg>
<svg class="r" style="left:672px;top:120.5px;" width="15" height="12" viewBox="0 0 15 12"><rect x="1" y="1" width="12.5" height="10" fill="#d5ebf8" stroke="#555" stroke-width="1.1"/>
<path d="M1 4.3 H13.5 M1 7.6 H13.5 M7 1 V11" stroke="#555" stroke-width="0.8"/>
<path d="M1.5 6 H6 M3.2 4.4 L1.5 6 L3.2 7.6" fill="none" stroke="#3b83c4" stroke-width="1"/></svg>
<div class="t" style="left:688.05px;top:121.00px;font-size:9.4px;color:#222;letter-spacing:-0.218px;-webkit-text-stroke:0.2px #222;">Ekle</div>
<svg class="r" style="left:719.1999999999999px;top:125.0px;" width="5.824999999999999" height="5" viewBox="0 0 5.824999999999999 5"><path d="M1 1 L2.9124999999999996 2.625625 L4.824999999999999 1" fill="none" stroke="#333" stroke-width="1.05"/></svg>
<svg class="r" style="left:672px;top:140.5px;" width="15" height="12" viewBox="0 0 15 12"><rect x="1" y="1" width="9" height="10" fill="#d5ebf8" stroke="#555" stroke-width="1.1"/>
<path d="M1 4.3 H10 M1 7.6 H10" stroke="#555" stroke-width="0.8"/>
<path d="M9.5 4 L13.5 8 M13.5 4 L9.5 8" stroke="#d9534f" stroke-width="1.1"/></svg>
<div class="t" style="left:688.80px;top:141.00px;font-size:9.4px;color:#222;-webkit-text-stroke:0.2px #222;">Sil</div>
<svg class="r" style="left:712.6999999999999px;top:145.0px;" width="5.824999999999999" height="5" viewBox="0 0 5.824999999999999 5"><path d="M1 1 L2.9124999999999996 2.625625 L4.824999999999999 1" fill="none" stroke="#333" stroke-width="1.05"/></svg>
<svg class="r" style="left:672px;top:160.5px;" width="15" height="12" viewBox="0 0 15 12"><rect x="1" y="1" width="12.5" height="10.5" fill="#d5ebf8" stroke="#555" stroke-width="1.1"/>
<path d="M1 4.3 H13.5 M1 7.6 H13.5 M4.5 1 V11.5 M10 1 V11.5" stroke="#555" stroke-width="0.8"/></svg>
<div class="t" style="left:688.05px;top:161.00px;font-size:9.4px;color:#222;letter-spacing:-0.155px;-webkit-text-stroke:0.2px #222;">Biçim</div>
<svg class="r" style="left:714.4px;top:165.0px;" width="5.824999999999999" height="5" viewBox="0 0 5.824999999999999 5"><path d="M1 1 L2.9124999999999996 2.625625 L4.824999999999999 1" fill="none" stroke="#333" stroke-width="1.05"/></svg>
<svg class="r" style="left:746px;top:119.5px;" width="12" height="13" viewBox="0 0 12 13"><path d="M10.5 2.5 V1 H1.5 L6 6.25 L1.5 11.5 H10.5 V10" fill="none" stroke="#444" stroke-width="1.1" stroke-linejoin="miter"/></svg>
<svg class="r" style="left:767.9px;top:124.0px;" width="5.824999999999999" height="5" viewBox="0 0 5.824999999999999 5"><path d="M1 1 L2.9124999999999996 2.625625 L4.824999999999999 1" fill="none" stroke="#333" stroke-width="1.05"/></svg>
<div class="t" style="left:783.50px;top:119.00px;font-size:7px;color:#3b83c4;">A</div>
<div class="t" style="left:783.50px;top:126.00px;font-size:7px;color:#333;font-weight:bold;">Z</div>
<svg class="r" style="left:788.5px;top:122.5px;" width="10" height="8" viewBox="0 0 10 8"><path d="M1 1 H8.5 L5.5 4.3 V7.2 L4 6.4 V4.3 Z" fill="#fff" stroke="#333" stroke-width="1.2" stroke-linejoin="round"/></svg>
<svg class="r" style="left:801.4px;top:124.0px;" width="5.824999999999999" height="5" viewBox="0 0 5.824999999999999 5"><path d="M1 1 L2.9124999999999996 2.625625 L4.824999999999999 1" fill="none" stroke="#333" stroke-width="1.05"/></svg>
<svg class="r" style="left:745px;top:139.5px;" width="14" height="13" viewBox="0 0 14 13"><rect x="1" y="1" width="11.8" height="11" fill="#d5ebf8" stroke="#555" stroke-width="1.1"/>
<path d="M1 3.5 H12.8" stroke="#555" stroke-width="1.4"/>
<path d="M6.9 5 V10 M4.9 8 L6.9 10 L8.9 8" fill="none" stroke="#3b83c4" stroke-width="1"/></svg>
<svg class="r" style="left:763.1999999999999px;top:144.5px;" width="5.824999999999999" height="5" viewBox="0 0 5.824999999999999 5"><path d="M1 1 L2.9124999999999996 2.625625 L4.824999999999999 1" fill="none" stroke="#333" stroke-width="1.05"/></svg>
<svg class="r" style="left:783.5px;top:138.5px;" width="15" height="15" viewBox="0 0 15 15"><circle cx="9" cy="5.2" r="4" fill="none" stroke="#444" stroke-width="1.1"/><path d="M6.2 8 L1.3 12.8" stroke="#444" stroke-width="1.2"/></svg>
<svg class="r" style="left:801.4px;top:144.5px;" width="5.824999999999999" height="5" viewBox="0 0 5.824999999999999 5"><path d="M1 1 L2.9124999999999996 2.625625 L4.824999999999999 1" fill="none" stroke="#333" stroke-width="1.05"/></svg>
<svg class="r" style="left:744.5px;top:159.5px;" width="14" height="14" viewBox="0 0 14 14"><path d="M8.5 1.5 L12.5 5.5 L6 12 L2 8 Z" fill="#f2e4f5" stroke="#a35bb3" stroke-width="1.1" stroke-linejoin="round"/>
<path d="M2 8 L6 12 L4.5 13 C3.5 13 1.5 11 1 10Z" fill="#b873c6"/><path d="M4.3 5.7 L8.3 9.7" stroke="#a35bb3" stroke-width="1"/></svg>
<svg class="r" style="left:763.1999999999999px;top:164.5px;" width="5.824999999999999" height="5" viewBox="0 0 5.824999999999999 5"><path d="M1 1 L2.9124999999999996 2.625625 L4.824999999999999 1" fill="none" stroke="#333" stroke-width="1.05"/></svg>
<svg class="r" style="left:833px;top:119.5px;" width="24" height="23" viewBox="0 0 24 23"><rect x="0.9" y="0.9" width="22" height="21.2" fill="#fff5ef" stroke="#d38b6c" stroke-width="1.2"/>
<rect x="3.5" y="3.3" width="7.2" height="7.2" fill="#fff" stroke="#d38b6c" stroke-width="1"/>
<rect x="12.8" y="3.3" width="7.2" height="7.2" fill="#fff" stroke="#d38b6c" stroke-width="1"/>
<rect x="3.5" y="12.2" width="7.2" height="7.2" fill="#fff" stroke="#d38b6c" stroke-width="1"/>
<rect x="12.8" y="12.2" width="7.2" height="7.2" fill="#fff" stroke="#d38b6c" stroke-width="1"/></svg>
<div class="t" style="left:826.26px;top:148.00px;font-size:9.2px;color:#3a3a3a;letter-spacing:-0.149px;">Eklentiler</div>
<svg class="r" style="left:883px;top:119.5px;" width="24" height="22" viewBox="0 0 24 22"><defs>
<linearGradient id="cp1" x1="0" y1="0" x2="0.3" y2="1"><stop offset="0" stop-color="#2f7de1"/><stop offset="0.5" stop-color="#2cb59a"/><stop offset="1" stop-color="#e9c43b"/></linearGradient>
<linearGradient id="cp2" x1="0" y1="0" x2="0.3" y2="1"><stop offset="0" stop-color="#8b5cf0"/><stop offset="0.45" stop-color="#e24f8c"/><stop offset="1" stop-color="#f58a3a"/></linearGradient></defs>
<path d="M7 1.5 H15 C12.5 3 11.5 7 10.5 12 C9.5 17 8 20.5 5 20.5 C2 20.5 0.5 18 0.8 14.5 L1.8 7.5 C2.3 3.5 4 1.5 7 1.5Z" fill="url(#cp1)"/>
<path d="M15 1.5 H19 C22 1.5 24 3.5 24 7 V14.5 C24 18.5 21.5 20.5 18 20.5 H8.5 C11 19 12.2 15 13 10.5 C13.8 6 14 3 15 1.5Z" fill="url(#cp2)"/>
<path d="M15.5 2 C14.3 3.5 14 6.5 13.3 10.5 C12.5 15 11.3 18.8 8.8 20.3" fill="none" stroke="#fff" stroke-width="1.6"/></svg>
<div class="t" style="left:879.40px;top:148.00px;font-size:10.2px;color:#333;">Copilot</div>
<svg class="r" style="left:891.9px;top:162.5px;" width="5.824999999999999" height="5" viewBox="0 0 5.824999999999999 5"><path d="M1 1 L2.9124999999999996 2.625625 L4.824999999999999 1" fill="none" stroke="#333" stroke-width="1.05"/></svg>
<div class="r" style="left:7px;top:198px;width:77px;height:16.8px;background:#fff;border-radius:3px;box-shadow:0 0.6px 0 #cfcfd3;"></div>
<div class="t" style="left:9.63px;top:202.00px;font-size:9.6px;color:#222;letter-spacing:0.356px;">E19</div>
<svg class="r" style="left:72.5px;top:203.5px;" width="9" height="6" viewBox="0 0 9 6"><path d="M1 1 L4.3 4.2 L7.6 1" fill="none" stroke="#333" stroke-width="0.9"/></svg>
<svg class="r" style="left:91px;top:201px;" width="4" height="12" viewBox="0 0 4 12"><circle cx="2" cy="2" r="0.9" fill="#555"/><circle cx="2" cy="6" r="0.9" fill="#555"/><circle cx="2" cy="10" r="0.9" fill="#555"/></svg>
<div class="r" style="left:101.8px;top:198px;width:64.2px;height:17px;background:#fff;border-radius:3px;"></div>
<svg class="r" style="left:104.5px;top:201px;" width="12" height="11" viewBox="0 0 12 11"><path d="M1.5 1.5 L10 10 M10 1.5 L1.5 10" stroke="#b5b5b5" stroke-width="1.1"/></svg>
<svg class="r" style="left:121.5px;top:201px;" width="14" height="11" viewBox="0 0 14 11"><path d="M1.5 6 L5 9.5 L12.5 1.5" fill="none" stroke="#b5b5b5" stroke-width="1.1"/></svg>
<div class="t" style="left:142.00px;top:199.00px;font-size:13px;color:#2a2a2a;font-family:'Liberation Serif',serif;font-style:italic;">fx</div>
<svg class="r" style="left:157px;top:203.5px;" width="9" height="6" viewBox="0 0 9 6"><path d="M1 1 L4 3.7 L7 1" fill="none" stroke="#aaa" stroke-width="1"/></svg>
<div class="r" style="left:170.7px;top:198px;width:740px;height:17px;background:#fff;border-radius:3px;"></div>
<svg class="r" style="left:8px;top:224px;" width="12" height="10" viewBox="0 0 12 10"><path d="M11 0.5 V9.5 H1 Z" fill="#b3b3b3"/></svg>
<div class="r" style="left:0px;top:422px;width:900px;height:78px;background:#fff;"></div>
</div></body></html>
